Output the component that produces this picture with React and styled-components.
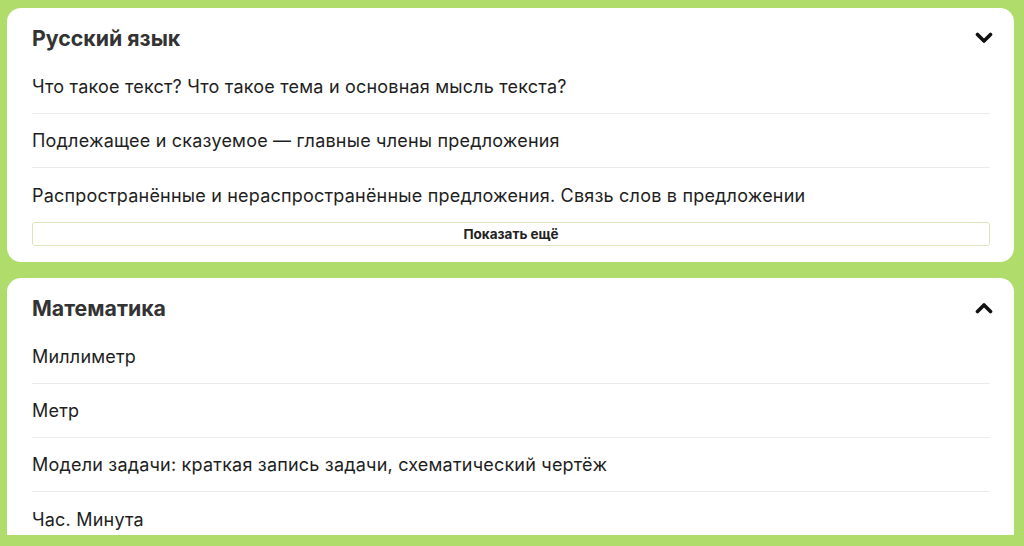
import React from "react";
import styled, { createGlobalStyle } from "styled-components";

const Global = createGlobalStyle`
  html, body {
    margin: 0;
    padding: 0;
    background: #afdc6b;
  }
  body {
    font-family: Inter, "Noto Sans", sans-serif;
    color: #222;
  }
`;

export const Page = styled.div`
  box-sizing: border-box;
  height: 546px;
  overflow: hidden;
  padding: 8px 10px 11px 7px;
  display: flex;
  flex-direction: column;
  gap: 16px;
`;

export const Card = styled.section`
  background: #fff;
  border-radius: ${(p) => (p.$cut ? "14px 14px 0 0" : "14px")};
  padding: 10px 20px 16px 25px;
  flex: ${(p) => (p.$cut ? "1" : "none")};
  min-height: 0;
  overflow: hidden;
`;

export const Header = styled.div`
  display: flex;
  align-items: center;
  justify-content: space-between;
  height: 42px;
  padding-bottom: 2px;
  box-sizing: border-box;
`;

export const Title = styled.h2`
  margin: 0;
  font-size: 21.3px;
  font-weight: 700;
  color: #333;
`;

export const Toggle = styled.button`
  border: 0;
  background: none;
  padding: 0;
  width: 20px;
  height: 20px;
  display: flex;
  align-items: center;
  justify-content: center;
  color: #111;
  cursor: pointer;
`;

export const List = styled.ul`
  list-style: none;
  margin: 0 4px 0 0;
  padding: 0;
`;

export const Item = styled.li`
  height: 54px;
  display: flex;
  align-items: center;
  font-size: 18px;
  letter-spacing: 0.2px;
  color: #1e1e1e;
  border-bottom: 1px solid #ebebeb;
  box-sizing: border-box;

  &:last-child {
    border-bottom: 0;
  }
`;

export const More = styled.button`
  display: block;
  width: calc(100% - 4px);
  height: 24px;
  border: 1px solid #dbe5bd;
  border-radius: 3px;
  background: #fff;
  font-family: Inter, "Noto Sans", sans-serif;
  font-size: 13.5px;
  font-weight: 700;
  color: #222;
  cursor: pointer;
`;

const Chevron = ({ up }) => (
  <svg width="18" height="12" viewBox="0 0 18 12" fill="none">
    <path
      d={up ? "M2.5 9.5 L9 3 L15.5 9.5" : "M2.5 2.5 L9 9 L15.5 2.5"}
      stroke="currentColor"
      strokeWidth="3.6"
      strokeLinecap="round"
      strokeLinejoin="round"
    />
  </svg>
);

const subjects = [
  {
    title: "Русский язык",
    open: false,
    items: [
      "Что такое текст? Что такое тема и основная мысль текста?",
      "Подлежащее и сказуемое — главные члены предложения",
      "Распространённые и нераспространённые предложения. Связь слов в предложении",
    ],
    more: true,
  },
  {
    title: "Математика",
    open: true,
    items: [
      "Миллиметр",
      "Метр",
      "Модели задачи: краткая запись задачи, схематический чертёж",
      "Час. Минута",
    ],
  },
];

export default () => {
  return (
    <>
      <Global />
      <Page>
        {subjects.map((s, i) => (
          <Card key={s.title} $cut={i === subjects.length - 1}>
            <Header>
              <Title>{s.title}</Title>
              <Toggle>
                <Chevron up={s.open} />
              </Toggle>
            </Header>
            <List>
              {s.items.map((t) => (
                <Item key={t}>{t}</Item>
              ))}
            </List>
            {s.more && <More>Показать ещё</More>}
          </Card>
        ))}
      </Page>
    </>
  );
};
